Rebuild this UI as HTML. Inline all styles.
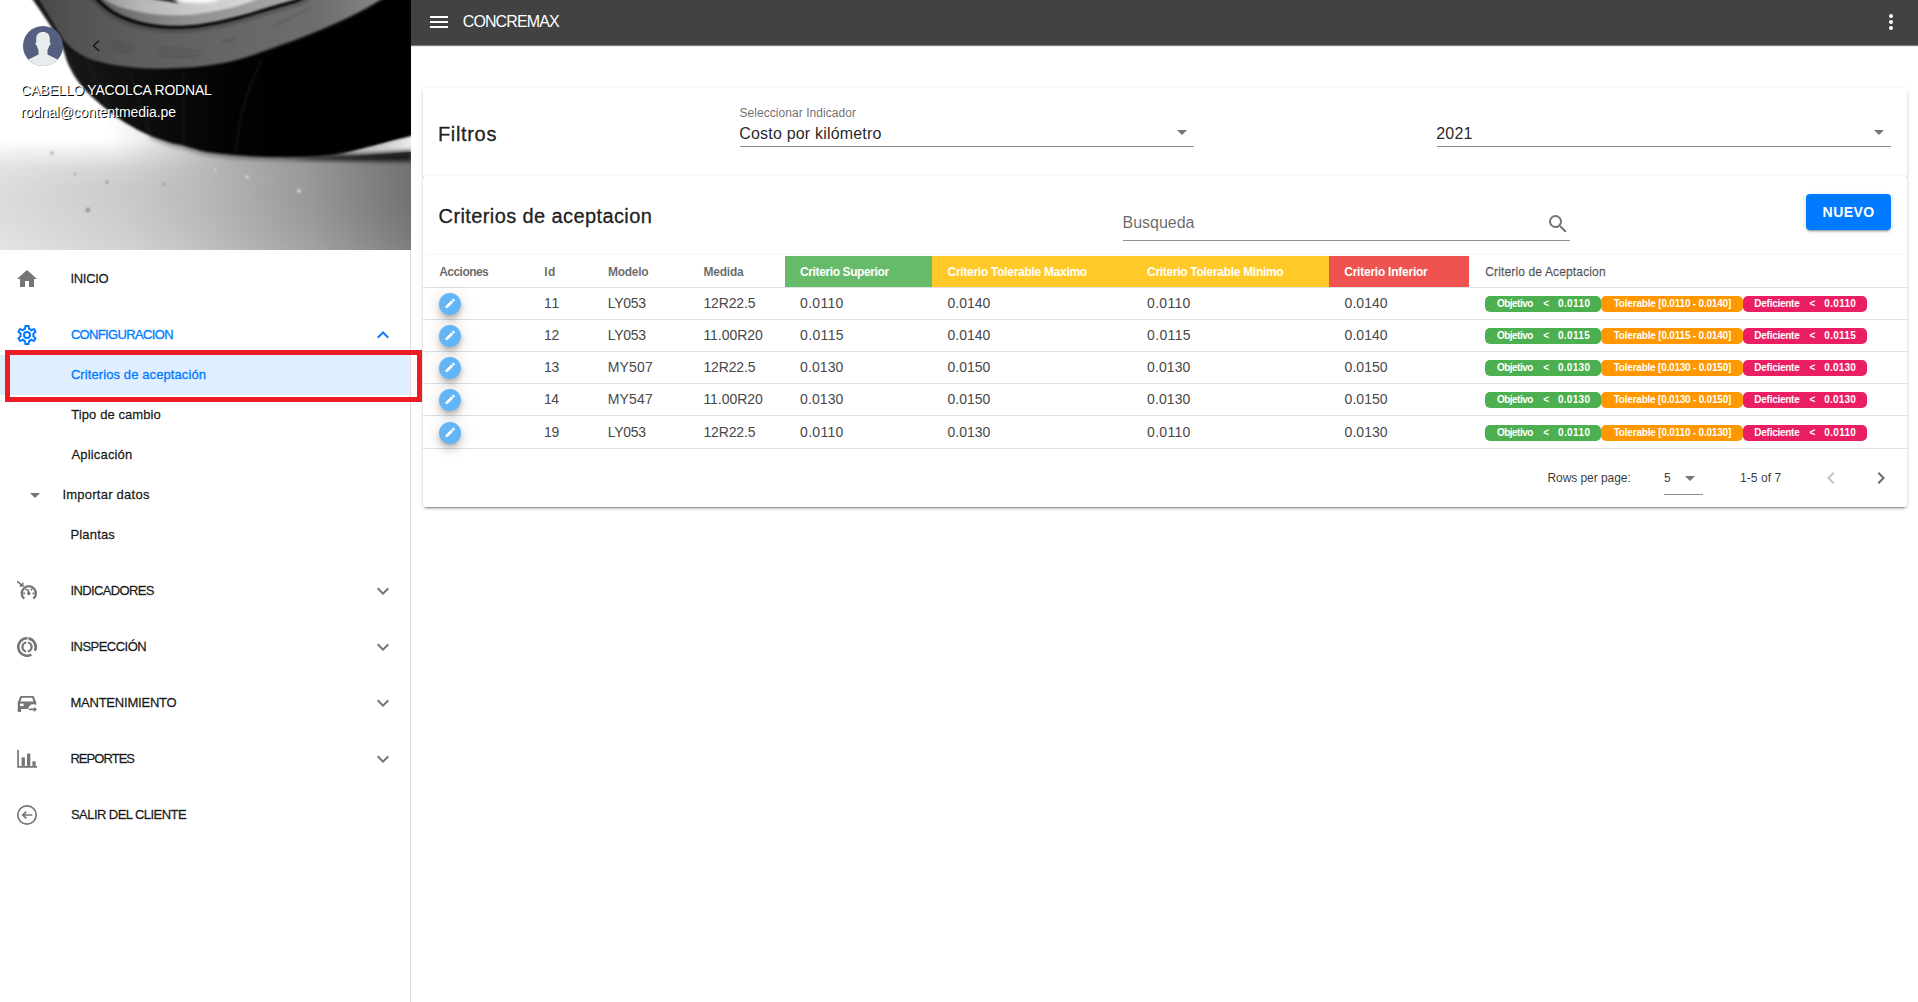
<!DOCTYPE html>
<html lang="es"><head><meta charset="utf-8"><title>CONCREMAX</title>
<style>
html,body{margin:0;padding:0}
body{width:1918px;height:1002px;overflow:hidden;position:relative;background:#fff;font-family:"Liberation Sans",sans-serif}
.t{position:absolute;white-space:pre;display:block}
.i{position:absolute;display:block;overflow:visible}
#drawer{position:absolute;left:0;top:0;width:410px;height:1002px;background:#fff;border-right:1px solid #dedede}
.tire{position:absolute;left:0;top:0;display:block}
.sel{position:absolute;left:0;top:355px;width:410px;height:40px;background:#e0efff}
#bar{position:absolute;left:411px;top:0;width:1507px;height:45px;background:#424242;box-shadow:0 1px 1px rgba(0,0,0,.5)}
#card1{position:absolute;left:423px;top:88px;width:1484px;height:90px;background:#fff;border-radius:4px;box-shadow:0 3px 1px -2px rgba(0,0,0,.2),0 2px 2px 0 rgba(0,0,0,.14),0 1px 5px 0 rgba(0,0,0,.12)}
#card2{position:absolute;left:423px;top:176px;width:1484px;height:331px;background:#fff;border-radius:4px;box-shadow:0 3px 1px -2px rgba(0,0,0,.28),0 2px 2px 0 rgba(0,0,0,.14),0 1px 5px 0 rgba(0,0,0,.12)}
#tbl{position:absolute;left:423px;top:255px;width:1484px;height:252px;background:#fff;border-radius:4px;box-shadow:0 -1px 2px rgba(0,0,0,.05)}
.ul{position:absolute;height:1px;background:#8f8f8f}
#btn{position:absolute;left:1806px;top:194px;width:85px;height:36px;background:#007bff;border-radius:4px;box-shadow:0 3px 1px -2px rgba(0,0,0,.2),0 2px 2px 0 rgba(0,0,0,.14),0 1px 5px 0 rgba(0,0,0,.12)}
.hc{position:absolute;top:256px;height:32px}
.hl{position:absolute;left:423px;width:1484px;height:1px;background:#e0e0e0}
.fab{position:absolute;left:439px;width:22px;height:22px;border-radius:50%;background:#64b5f6;box-shadow:0 3px 5px -1px rgba(0,0,0,.2),0 6px 10px 0 rgba(0,0,0,.14),0 1px 18px 0 rgba(0,0,0,.12)}
.chip{position:absolute;height:16px;border-radius:5px}
#red{position:absolute;left:5px;top:350px;width:407px;height:42px;border:5px solid #ed1c24}
</style></head>
<body>
<div id="drawer">
<svg class="tire" width="411" height="250" viewBox="0 0 411 250">
<defs>
<linearGradient id="gnd" x1="0" y1="0" x2="1" y2="0"><stop offset="0" stop-color="#e2e2e2"/><stop offset=".3" stop-color="#d0d0d0"/><stop offset=".5" stop-color="#bcbcbc"/><stop offset=".75" stop-color="#9c9c9c"/><stop offset="1" stop-color="#747474"/></linearGradient>
<linearGradient id="gv" x1="0" y1="0" x2="0" y2="1"><stop offset="0" stop-color="#000" stop-opacity=".06"/><stop offset=".5" stop-color="#000" stop-opacity=".02"/><stop offset="1" stop-color="#fff" stop-opacity=".08"/></linearGradient>
<linearGradient id="hz" x1="0" y1="0" x2="0" y2="1"><stop offset="0" stop-color="#fff" stop-opacity="1"/><stop offset=".42" stop-color="#fff" stop-opacity="1"/><stop offset=".6" stop-color="#fff" stop-opacity=".6"/><stop offset=".8" stop-color="#fff" stop-opacity=".15"/><stop offset="1" stop-color="#fff" stop-opacity="0"/></linearGradient>
<linearGradient id="hzx" x1="0" y1="0" x2="1" y2="0"><stop offset="0" stop-color="#fff" stop-opacity="1"/><stop offset=".26" stop-color="#fff" stop-opacity="1"/><stop offset=".56" stop-color="#fff" stop-opacity="0"/></linearGradient>
<mask id="hm"><rect x="0" y="100" width="411" height="90" fill="url(#hzx)"/></mask>
<linearGradient id="tr" x1="0" y1="0" x2="1" y2="0"><stop offset="0" stop-color="#1d1d1d"/><stop offset=".3" stop-color="#0d0d0d"/><stop offset=".55" stop-color="#020202"/><stop offset="1" stop-color="#000"/></linearGradient>
<linearGradient id="sw" x1="0" y1="0" x2="1" y2="0"><stop offset="0" stop-color="#464646"/><stop offset=".12" stop-color="#525252"/><stop offset=".3" stop-color="#5e5e5e"/><stop offset=".55" stop-color="#666"/><stop offset=".8" stop-color="#6e6e6e"/><stop offset="1" stop-color="#8a8a8a"/></linearGradient>
<linearGradient id="rm" x1="0" y1="0" x2="1" y2="0"><stop offset="0" stop-color="#4c4c4c"/><stop offset=".2" stop-color="#727272"/><stop offset=".45" stop-color="#8e8e8e"/><stop offset=".75" stop-color="#9e9e9e"/><stop offset="1" stop-color="#adadad"/></linearGradient>
<linearGradient id="rl" x1="0" y1="0" x2="1" y2="0"><stop offset="0" stop-color="#929292"/><stop offset=".25" stop-color="#b6b6b6"/><stop offset=".6" stop-color="#cbcbcb"/><stop offset="1" stop-color="#dadada"/></linearGradient>
<filter id="b1" color-interpolation-filters="sRGB" x="-5%" y="-5%" width="110%" height="110%"><feGaussianBlur stdDeviation=".8"/></filter>
<filter id="b2" color-interpolation-filters="sRGB" x="-10%" y="-10%" width="120%" height="120%"><feGaussianBlur stdDeviation="1.6"/></filter>
<filter id="b3" color-interpolation-filters="sRGB" x="-10%" y="-100%" width="120%" height="300%"><feGaussianBlur stdDeviation="2"/></filter>
<linearGradient id="wg" x1="0" y1="0" x2="1" y2="0"><stop offset="0" stop-color="#aaa" stop-opacity="0"/><stop offset=".3" stop-color="#c4c4c4" stop-opacity=".8"/><stop offset="1" stop-color="#ececec"/></linearGradient>
</defs>
<rect width="411" height="250" fill="#fff"/>
<rect y="110" width="411" height="140" fill="url(#gnd)"/>
<rect y="110" width="411" height="140" fill="url(#gv)"/>
<g mask="url(#hm)"><rect y="106" width="411" height="80" fill="url(#hz)"/></g>
<path d="M150.0 135.5 C153.3 136.8 164.5 141.2 170.0 143.0 C175.5 144.8 178.0 144.7 183.0 146.0 C188.0 147.3 194.7 149.8 200.0 151.0 C205.3 152.2 208.3 152.7 215.0 153.5 C221.7 154.3 230.8 155.3 240.0 156.0 C249.2 156.7 260.0 157.2 270.0 157.5 C280.0 157.8 290.8 157.8 300.0 157.5 C309.2 157.2 317.5 156.8 325.0 156.0 C332.5 155.2 341.7 153.5 345.0 153.0" fill="none" stroke="#000" stroke-width="5" opacity=".36" filter="url(#b3)"/>
<path d="M334 155 Q375 146 412 134 L412 152 Q372 155 334 156.500 Z" fill="url(#wg)"/>
<path d="M285 158.500 Q350 155.500 412 150.500 L412 161.500 Q350 162 285 158.500 Z" fill="#141414" opacity=".9" filter="url(#b3)"/>
<g fill="#555" opacity=".55" filter="url(#b1)"><circle cx="52" cy="153" r="1.6"/><circle cx="107" cy="182" r="1.5"/><circle cx="88" cy="210" r="2.2"/><circle cx="75" cy="174" r="1.1"/><circle cx="164" cy="184" r="1.2"/></g>
<g fill="#eee" opacity=".7" filter="url(#b1)"><circle cx="247" cy="177" r="1.8"/><circle cx="299" cy="191" r="2"/><circle cx="215" cy="170" r="1.2"/></g>
<g filter="url(#b1)">
<path d="M29.0 -6.0 C29.7 -5.0 29.8 -4.7 33.0 0.0 C36.2 4.7 43.3 14.7 48.0 22.0 C52.7 29.3 57.5 36.7 61.0 44.0 C64.5 51.3 65.8 59.3 69.0 66.0 C72.2 72.7 75.7 78.4 80.0 84.0 C84.3 89.6 88.7 93.8 95.0 99.5 C101.3 105.2 109.8 112.4 118.0 118.0 C126.2 123.6 135.3 128.9 144.0 133.0 C152.7 137.1 163.5 140.4 170.0 142.5 C176.5 144.6 178.0 144.2 183.0 145.5 C188.0 146.8 194.7 149.2 200.0 150.5 C205.3 151.8 208.3 152.2 215.0 153.0 C221.7 153.8 230.8 154.8 240.0 155.5 C249.2 156.2 260.0 156.8 270.0 157.0 C280.0 157.2 290.8 157.2 300.0 157.0 C309.2 156.8 317.5 156.2 325.0 155.5 C332.5 154.8 339.2 153.6 345.0 152.5 C350.8 151.4 353.3 150.7 360.0 149.0 C366.7 147.3 376.2 144.8 385.0 142.5 C393.8 140.2 408.3 136.7 413.0 135.5 L413 -8 L30 -8 Z" fill="url(#tr)"/>
<path d="M35.0 -6.0 C35.5 -5.0 35.5 -4.3 38.0 0.0 C40.5 4.3 45.8 13.2 50.0 20.0 C54.2 26.8 59.2 35.9 63.0 41.0 C66.8 46.1 69.2 47.6 73.0 50.5 C76.8 53.4 81.5 56.4 86.0 58.5 C90.5 60.6 95.3 61.8 100.0 63.0 C104.7 64.2 108.2 65.1 114.0 66.0 C119.8 66.9 128.2 67.9 135.0 68.5 C141.8 69.1 148.3 69.4 155.0 69.5 C161.7 69.6 168.2 69.3 175.0 69.0 C181.8 68.7 189.2 68.5 196.0 67.8 C202.8 67.1 209.3 66.1 216.0 65.0 C222.7 63.9 229.2 62.8 236.0 61.0 C242.8 59.2 250.2 56.8 257.0 54.5 C263.8 52.2 269.8 50.0 277.0 47.4 C284.2 44.8 292.8 41.7 300.0 39.0 C307.2 36.3 312.5 34.2 320.0 31.0 C327.5 27.8 337.5 23.5 345.0 20.0 C352.5 16.5 358.8 13.3 365.0 10.0 C371.2 6.7 377.5 2.8 382.0 0.0 C386.5 -2.8 390.3 -5.8 392.0 -7.0 L30 -8 Z" fill="url(#sw)"/>
<path d="M35.0 -6.0 C35.5 -5.0 35.5 -4.3 38.0 0.0 C40.5 4.3 45.8 13.2 50.0 20.0 C54.2 26.8 59.2 35.9 63.0 41.0 C66.8 46.1 69.2 47.6 73.0 50.5 C76.8 53.4 81.5 56.4 86.0 58.5 C90.5 60.6 95.3 61.8 100.0 63.0 C104.7 64.2 108.2 65.1 114.0 66.0 C119.8 66.9 128.2 67.9 135.0 68.5 C141.8 69.1 148.3 69.4 155.0 69.5 C161.7 69.6 168.2 69.3 175.0 69.0 C181.8 68.7 189.2 68.5 196.0 67.8 C202.8 67.1 209.3 66.1 216.0 65.0 C222.7 63.9 229.2 62.8 236.0 61.0 C242.8 59.2 250.2 56.8 257.0 54.5 C263.8 52.2 269.8 50.0 277.0 47.4 C284.2 44.8 292.8 41.7 300.0 39.0 C307.2 36.3 312.5 34.2 320.0 31.0 C327.5 27.8 337.5 23.5 345.0 20.0 C352.5 16.5 358.8 13.3 365.0 10.0 C371.2 6.7 377.5 2.8 382.0 0.0 C386.5 -2.8 390.3 -5.8 392.0 -7.0" fill="none" stroke="#0a0a0a" stroke-width="2.2" opacity=".8"/>
<path d="M62 44 L78 80 M86 58 L112 112 M130 72 L150 134 M183 73 L184 144" stroke="#2a2a2a" stroke-width="1.3" fill="none" opacity=".55"/>
<path d="M262 60 Q240 100 236 154" stroke="#1c1c1c" stroke-width="1.2" fill="none"/>
<path d="M90.0 -7.0 C91.3 -5.8 95.5 -2.2 98.0 0.0 C100.5 2.2 102.3 4.3 105.0 6.5 C107.7 8.7 110.3 10.9 114.0 13.0 C117.7 15.1 122.5 17.2 127.0 19.0 C131.5 20.8 136.3 22.3 141.0 23.5 C145.7 24.7 150.5 25.4 155.0 26.0 C159.5 26.6 163.5 27.0 168.0 27.2 C172.5 27.4 177.3 27.4 182.0 27.2 C186.7 27.0 191.3 26.7 196.0 26.2 C200.7 25.7 205.5 24.8 210.0 24.0 C214.5 23.2 217.5 22.8 223.0 21.5 C228.5 20.2 236.3 18.3 243.0 16.5 C249.7 14.7 256.8 12.3 263.0 10.5 C269.2 8.7 274.3 7.2 280.0 5.5 C285.7 3.8 292.0 2.4 297.0 0.5 C302.0 -1.4 307.8 -4.9 310.0 -6.0 L82 -8 Z" fill="url(#rm)"/>
<path d="M97.0 -8.0 C98.3 -6.7 101.5 -2.4 105.0 0.0 C108.5 2.4 113.0 4.7 118.0 6.5 C123.0 8.3 129.3 9.8 135.0 11.0 C140.7 12.2 146.5 13.3 152.0 14.0 C157.5 14.7 163.0 15.0 168.0 15.2 C173.0 15.4 177.3 15.4 182.0 15.2 C186.7 15.0 190.3 14.9 196.0 14.2 C201.7 13.5 209.3 12.3 216.0 11.0 C222.7 9.7 230.3 8.0 236.0 6.5 C241.7 5.0 246.5 3.2 250.0 2.0 C253.5 0.8 254.5 0.7 257.0 -1.0 C259.5 -2.7 263.7 -6.8 265.0 -8.0 Z" fill="url(#rl)"/>
<path d="M90.0 -7.0 C91.3 -5.8 95.5 -2.2 98.0 0.0 C100.5 2.2 102.3 4.3 105.0 6.5 C107.7 8.7 110.3 10.9 114.0 13.0 C117.7 15.1 122.5 17.2 127.0 19.0 C131.5 20.8 136.3 22.3 141.0 23.5 C145.7 24.7 150.5 25.4 155.0 26.0 C159.5 26.6 163.5 27.0 168.0 27.2 C172.5 27.4 177.3 27.4 182.0 27.2 C186.7 27.0 191.3 26.7 196.0 26.2 C200.7 25.7 205.5 24.8 210.0 24.0 C214.5 23.2 217.5 22.8 223.0 21.5 C228.5 20.2 236.3 18.3 243.0 16.5 C249.7 14.7 256.8 12.3 263.0 10.5 C269.2 8.7 274.3 7.2 280.0 5.5 C285.7 3.8 292.0 2.4 297.0 0.5 C302.0 -1.4 307.8 -4.9 310.0 -6.0" fill="none" stroke="#000" stroke-width="6" opacity=".16" transform="translate(0,3)"/>
<path d="M90.0 -7.0 C91.3 -5.8 95.5 -2.2 98.0 0.0 C100.5 2.2 102.3 4.3 105.0 6.5 C107.7 8.7 110.3 10.9 114.0 13.0 C117.7 15.1 122.5 17.2 127.0 19.0 C131.5 20.8 136.3 22.3 141.0 23.5 C145.7 24.7 150.5 25.4 155.0 26.0 C159.5 26.6 163.5 27.0 168.0 27.2 C172.5 27.4 177.3 27.4 182.0 27.2 C186.7 27.0 191.3 26.7 196.0 26.2 C200.7 25.7 205.5 24.8 210.0 24.0 C214.5 23.2 217.5 22.8 223.0 21.5 C228.5 20.2 236.3 18.3 243.0 16.5 C249.7 14.7 256.8 12.3 263.0 10.5 C269.2 8.7 274.3 7.2 280.0 5.5 C285.7 3.8 292.0 2.4 297.0 0.5 C302.0 -1.4 307.8 -4.9 310.0 -6.0" fill="none" stroke="#030303" stroke-width="3"/>
<ellipse cx="198" cy="-1" rx="21" ry="3.800" fill="#fff" filter="url(#b2)"/>
<path d="M146 -2 L179 3.5 L171 -2 Z" fill="#2c2c2c"/>
</g>
<g stroke="#3a3a3a" stroke-width="1" opacity=".55" fill="none" filter="url(#b1)">
<path d="M112 41 l22 6 M112 45 l20 5 M111 49 l18 4"/>
<path d="M160 47 l40 4 M158 51 l42 4 M158 55 l40 3"/>
<path d="M222 42 l14 -3 M272 27 l38 -19"/>
</g>
</svg>
<svg class="i" style="left:23px;top:26px" width="40" height="40" viewBox="0 0 40 40"><defs><clipPath id="av"><circle cx="20" cy="20" r="20"/></clipPath></defs><g clip-path="url(#av)"><rect width="40" height="40" fill="#556080"/><path d="M20 6c-4.300 0-6.800 2.700-6.800 6.600v3.600c-.5.300-.7 1-.6 1.800.1 1 .6 1.600 1.200 1.800.3 1.300 1.200 3.200 1.700 4.200v4.400L5.500 33.500 3 41h34l-2.500-7.500-10-5.100V24c.5-1 1.400-2.900 1.700-4.200.6-.2 1.100-.8 1.200-1.800.1-.8-.1-1.500-.6-1.800v-3.600C26.800 8.700 24.300 6 20 6z" fill="#e7eced"/></g></svg>
<svg class="i" style="left:85px;top:34px" width="24" height="24" viewBox="0 0 24 24" fill="none" stroke="#14142a" stroke-width="1.500"><path d="M14 6.500L8.600 11.700L14 17"/></svg>
<div class="sel"></div>
<svg class="i" style="left:15px;top:267px" width="24" height="24" viewBox="0 0 24 24" fill="#757575" ><path d="M10,20V14H14V20H19V12H22L12,3L2,12H5V20H10Z"/></svg>
<svg class="i" style="left:15px;top:323px" width="24" height="24" viewBox="0 0 24 24" fill="#007bff" ><path d="M12,8A4,4 0 0,1 16,12A4,4 0 0,1 12,16A4,4 0 0,1 8,12A4,4 0 0,1 12,8M12,10A2,2 0 0,0 10,12A2,2 0 0,0 12,14A2,2 0 0,0 14,12A2,2 0 0,0 12,10M10,22C9.75,22 9.54,21.82 9.5,21.58L9.13,18.93C8.5,18.68 7.96,18.34 7.44,17.94L4.95,18.95C4.73,19.03 4.46,18.95 4.34,18.73L2.34,15.27C2.21,15.05 2.27,14.78 2.46,14.63L4.57,12.97L4.5,12L4.57,11L2.46,9.37C2.27,9.22 2.21,8.95 2.34,8.73L4.34,5.27C4.46,5.05 4.73,4.96 4.95,5.05L7.44,6.05C7.96,5.66 8.5,5.32 9.13,5.07L9.5,2.42C9.54,2.18 9.75,2 10,2H14C14.25,2 14.46,2.18 14.5,2.42L14.87,5.07C15.5,5.32 16.04,5.66 16.56,6.05L19.05,5.05C19.27,4.96 19.54,5.05 19.66,5.27L21.66,8.73C21.79,8.95 21.73,9.22 21.54,9.37L19.43,11L19.5,12L19.43,13L21.54,14.63C21.73,14.78 21.79,15.05 21.66,15.27L19.66,18.73C19.54,18.95 19.27,19.04 19.05,18.95L16.56,17.95C16.04,18.34 15.5,18.68 14.87,18.93L14.5,21.58C14.46,21.82 14.25,22 14,22H10M11.25,4L10.88,6.61C9.68,6.86 8.62,7.5 7.85,8.39L5.44,7.35L4.69,8.65L6.8,10.2C6.4,11.37 6.4,12.64 6.8,13.8L4.68,15.36L5.43,16.66L7.86,15.62C8.63,16.5 9.68,17.14 10.87,17.38L11.24,20H12.76L13.13,17.39C14.32,17.14 15.37,16.5 16.14,15.62L18.57,16.66L19.32,15.36L17.2,13.81C17.6,12.64 17.6,11.37 17.2,10.2L19.31,8.65L18.56,7.35L16.15,8.39C15.38,7.5 14.32,6.86 13.12,6.62L12.75,4H11.25Z"/></svg>
<svg class="i" style="left:371px;top:322.5px" width="24" height="24" viewBox="0 0 24 24" fill="#007bff" ><path d="M7.41,15.41L12,10.83L16.59,15.41L18,14L12,8L6,14L7.41,15.41Z"/></svg>
<svg class="i" style="left:23px;top:483px" width="24" height="24" viewBox="0 0 24 24" fill="#757575" ><path d="M7,10L12,15L17,10H7Z"/></svg>
<svg class="i" style="left:371px;top:579px" width="24" height="24" viewBox="0 0 24 24" fill="#757575" ><path d="M7.41,8.58L12,13.17L16.59,8.58L18,10L12,16L6,10L7.41,8.58Z"/></svg>
<svg class="i" style="left:371px;top:635px" width="24" height="24" viewBox="0 0 24 24" fill="#757575" ><path d="M7.41,8.58L12,13.17L16.59,8.58L18,10L12,16L6,10L7.41,8.58Z"/></svg>
<svg class="i" style="left:371px;top:691px" width="24" height="24" viewBox="0 0 24 24" fill="#757575" ><path d="M7.41,8.58L12,13.17L16.59,8.58L18,10L12,16L6,10L7.41,8.58Z"/></svg>
<svg class="i" style="left:371px;top:747px" width="24" height="24" viewBox="0 0 24 24" fill="#757575" ><path d="M7.41,8.58L12,13.17L16.59,8.58L18,10L12,16L6,10L7.41,8.58Z"/></svg>
<svg class="i" style="left:15px;top:578px" width="24" height="24" viewBox="0 0 24 24" fill="none" stroke="#757575">
<path d="M9.240 20.740A7.100 7.100 0 1 1 18.360 20.740" stroke-width="2.300"/>
<path d="M8.200 15.400h1.900M17.500 15.400h1.900M10.500 10.700l1.100 1.500M17.100 10.700l-1.100 1.500" stroke-width="1.700"/>
<circle cx="13.800" cy="15.400" r="1.700" fill="#757575" stroke="none"/>
<path d="M13.800 15.400l-1-4.200" stroke-width="1.700"/>
<path d="M2.200 3.300l5.300 4.300M7.800 4.800v3.100H4.700" stroke-width="1.600"/>
</svg>
<svg class="i" style="left:15px;top:635px" width="24" height="24" viewBox="0 0 24 24" fill="none" stroke="#757575">
<path d="M16.350 19.530A8.700 8.700 0 1 1 19.880 15.680" stroke-width="2.600"/>
<path d="M20.700 9.500v4.600" stroke-width="1.800"/>
<path d="M12.900 1.500v3.600" stroke="#fff" stroke-width="1"/>
<circle cx="12" cy="12" r="4.600" stroke-width="2.300"/>
<path d="M12.200 5.800v3M12 15.300v3" stroke="#fff" stroke-width="1.800"/>
</svg>
<svg class="i" style="left:15px;top:691px" width="24" height="24" viewBox="0 0 24 24" fill="#757575">
<path d="M6.400 5h11.200c.7 0 1.300.4 1.500 1.100L21.200 11.400V18H2.800V20.700H6V18H2.800V11.400L4.900 6.100C5.100 5.400 5.700 5 6.400 5z"/>
<rect x="2.800" y="17.500" width="3.300" height="3.200"/>
<path d="M6.900 6.700h10.200l1.500 3.900H5.400z" fill="#fff"/>
<rect x="5" y="12.600" width="3.600" height="2.500" fill="#fff"/>
<circle cx="18.200" cy="18.300" r="5" fill="#fff"/>
<path d="M13.800 17.600h5v-1.900l3.300 2.700-3.300 2.700v-1.900h-5z"/>
</svg>
<svg class="i" style="left:15px;top:747px" width="24" height="24" viewBox="0 0 24 24" fill="#757575">
<path d="M2.200 3h1.700v15.900H22v1.900H2.200z"/><rect x="6.600" y="10.400" width="3.300" height="8.500"/><rect x="12" y="6.600" width="3.300" height="12.300"/><rect x="17.400" y="14.300" width="3.300" height="4.600"/>
</svg>
<svg class="i" style="left:15px;top:803px" width="24" height="24" viewBox="0 0 24 24" fill="none" stroke="#757575">
<circle cx="12" cy="12" r="9.200" stroke-width="1.700"/><path d="M17.300 12H8.200M11.300 8.600L7.800 12l3.500 3.400" stroke-width="1.700"/>
</svg>
</div>
<div id="bar"></div>
<svg class="i" style="left:427px;top:10px" width="24" height="24" viewBox="0 0 24 24" fill="#fff" ><path d="M3,6H21V8H3V6M3,11H21V13H3V11M3,16H21V18H3V16Z"/></svg>
<svg class="i" style="left:1879px;top:10px" width="24" height="24" viewBox="0 0 24 24" fill="#fff" ><path d="M12,16A2,2 0 0,1 14,18A2,2 0 0,1 12,20A2,2 0 0,1 10,18A2,2 0 0,1 12,16M12,10A2,2 0 0,1 14,12A2,2 0 0,1 12,14A2,2 0 0,1 10,12A2,2 0 0,1 12,10M12,4A2,2 0 0,1 14,6A2,2 0 0,1 12,8A2,2 0 0,1 10,6A2,2 0 0,1 12,4Z"/></svg>
<div id="card1"></div><div id="card2"></div><div id="tbl"></div>
<div class="ul" style="left:740px;top:146px;width:454px"></div>
<div class="ul" style="left:1437px;top:146px;width:454px"></div>
<div class="ul" style="left:1123px;top:240px;width:447px"></div>
<svg class="i" style="left:1170px;top:119.6px" width="24" height="24" viewBox="0 0 24 24" fill="#757575" ><path d="M7,10L12,15L17,10H7Z"/></svg>
<svg class="i" style="left:1867px;top:119.8px" width="24" height="24" viewBox="0 0 24 24" fill="#757575" ><path d="M7,10L12,15L17,10H7Z"/></svg>
<svg class="i" style="left:1545.7px;top:212px" width="24" height="24" viewBox="0 0 24 24" fill="#757575" ><path d="M9.5,3A6.5,6.5 0 0,1 16,9.5C16,11.11 15.41,12.59 14.44,13.73L14.71,14H15.5L20.5,19L19,20.5L14,15.5V14.71L13.73,14.44C12.59,15.41 11.11,16 9.5,16A6.5,6.5 0 0,1 3,9.5A6.5,6.5 0 0,1 9.5,3M9.5,5C7,5 5,7 5,9.5C5,12 7,14 9.5,14C12,14 14,12 14,9.5C14,7 12,5 9.5,5Z"/></svg>
<div id="btn"></div>
<div class="hc" style="left:785px;width:147px;background:#66bb6a"></div>
<div class="hc" style="left:932px;width:397px;background:#ffca28"></div>
<div class="hc" style="left:1329px;width:140px;background:#ef5350"></div>
<div class="hl" style="top:287px"></div>
<div class="hl" style="top:319px"></div>
<div class="hl" style="top:351px"></div>
<div class="hl" style="top:383px"></div>
<div class="hl" style="top:415px"></div>
<div class="hl" style="top:448px"></div>
<div class="fab" style="top:293px"></div>
<svg class="i" style="left:443.6px;top:297.4px" width="12.6" height="12.6" viewBox="0 0 24 24" fill="#fff" ><path d="M20.71,7.04C21.1,6.65 21.1,6 20.71,5.63L18.37,3.29C18,2.9 17.35,2.9 16.96,3.29L15.12,5.12L18.87,8.87M3,17.25V21H6.75L17.81,9.93L14.06,6.18L3,17.25Z"/></svg>
<div class="chip" style="left:1485px;top:296px;width:116px;background:#4caf50"></div>
<div class="chip" style="left:1601.200px;top:296px;width:141.800px;background:#ff9800"></div>
<div class="chip" style="left:1743.200px;top:296px;width:123.800px;background:#e91e63"></div>
<div class="fab" style="top:325px"></div>
<svg class="i" style="left:443.6px;top:329.4px" width="12.6" height="12.6" viewBox="0 0 24 24" fill="#fff" ><path d="M20.71,7.04C21.1,6.65 21.1,6 20.71,5.63L18.37,3.29C18,2.9 17.35,2.9 16.96,3.29L15.12,5.12L18.87,8.87M3,17.25V21H6.75L17.81,9.93L14.06,6.18L3,17.25Z"/></svg>
<div class="chip" style="left:1485px;top:328px;width:116px;background:#4caf50"></div>
<div class="chip" style="left:1601.200px;top:328px;width:141.800px;background:#ff9800"></div>
<div class="chip" style="left:1743.200px;top:328px;width:123.800px;background:#e91e63"></div>
<div class="fab" style="top:357px"></div>
<svg class="i" style="left:443.6px;top:361.4px" width="12.6" height="12.6" viewBox="0 0 24 24" fill="#fff" ><path d="M20.71,7.04C21.1,6.65 21.1,6 20.71,5.63L18.37,3.29C18,2.9 17.35,2.9 16.96,3.29L15.12,5.12L18.87,8.87M3,17.25V21H6.75L17.81,9.93L14.06,6.18L3,17.25Z"/></svg>
<div class="chip" style="left:1485px;top:360px;width:116px;background:#4caf50"></div>
<div class="chip" style="left:1601.200px;top:360px;width:141.800px;background:#ff9800"></div>
<div class="chip" style="left:1743.200px;top:360px;width:123.800px;background:#e91e63"></div>
<div class="fab" style="top:389px"></div>
<svg class="i" style="left:443.6px;top:393.4px" width="12.6" height="12.6" viewBox="0 0 24 24" fill="#fff" ><path d="M20.71,7.04C21.1,6.65 21.1,6 20.71,5.63L18.37,3.29C18,2.9 17.35,2.9 16.96,3.29L15.12,5.12L18.87,8.87M3,17.25V21H6.75L17.81,9.93L14.06,6.18L3,17.25Z"/></svg>
<div class="chip" style="left:1485px;top:392px;width:116px;background:#4caf50"></div>
<div class="chip" style="left:1601.200px;top:392px;width:141.800px;background:#ff9800"></div>
<div class="chip" style="left:1743.200px;top:392px;width:123.800px;background:#e91e63"></div>
<div class="fab" style="top:421.5px"></div>
<svg class="i" style="left:443.6px;top:425.9px" width="12.6" height="12.6" viewBox="0 0 24 24" fill="#fff" ><path d="M20.71,7.04C21.1,6.65 21.1,6 20.71,5.63L18.37,3.29C18,2.9 17.35,2.9 16.96,3.29L15.12,5.12L18.87,8.87M3,17.25V21H6.75L17.81,9.93L14.06,6.18L3,17.25Z"/></svg>
<div class="chip" style="left:1485px;top:425px;width:116px;background:#4caf50"></div>
<div class="chip" style="left:1601.200px;top:425px;width:141.800px;background:#ff9800"></div>
<div class="chip" style="left:1743.200px;top:425px;width:123.800px;background:#e91e63"></div>
<div class="ul" style="left:1664px;top:494px;width:39px"></div>
<svg class="i" style="left:1678.4px;top:465.8px" width="24" height="24" viewBox="0 0 24 24" fill="#757575" ><path d="M7,10L12,15L17,10H7Z"/></svg>
<svg class="i" style="left:1819px;top:466px" width="24" height="24" viewBox="0 0 24 24" fill="#c4c4c4" ><path d="M15.41,16.58L10.83,12L15.41,7.41L14,6L8,12L14,18L15.41,16.58Z"/></svg>
<svg class="i" style="left:1869px;top:466px" width="24" height="24" viewBox="0 0 24 24" fill="#6a6a6a" ><path d="M8.59,16.58L13.17,12L8.59,7.41L10,6L16,12L10,18L8.59,16.58Z"/></svg>
<div id="red"></div>
<span class="t" style="left:462.75px;top:13.5px;font-size:16px;line-height:16px;letter-spacing:-0.898px;color:#fff;">CONCREMAX</span>
<span class="t" style="left:20.84px;top:82.5px;font-size:14px;line-height:14px;letter-spacing:-0.218px;color:#fff;text-shadow:1px 1px 0 #000;">CABELLO YACOLCA RODNAL</span>
<span class="t" style="left:20.62px;top:104.5px;font-size:14px;line-height:14px;letter-spacing:-0.053px;color:#fff;text-shadow:1px 1px 0 #000;">rodnal@contentmedia.pe</span>
<span class="t" style="left:70.48px;top:272.0px;font-size:13px;line-height:13px;letter-spacing:-0.309px;color:rgba(0,0,0,.87);-webkit-text-stroke:.3px currentColor;">INICIO</span>
<span class="t" style="left:70.89px;top:328.0px;font-size:13px;line-height:13px;letter-spacing:-0.653px;color:#007bff;-webkit-text-stroke:.3px currentColor;">CONFIGURACION</span>
<span class="t" style="left:70.89px;top:368.0px;font-size:13px;line-height:13px;letter-spacing:0.097px;color:#007bff;-webkit-text-stroke:.3px currentColor;">Criterios de aceptación</span>
<span class="t" style="left:71.3px;top:408.0px;font-size:13px;line-height:13px;letter-spacing:0.083px;color:rgba(0,0,0,.87);-webkit-text-stroke:.3px currentColor;">Tipo de cambio</span>
<span class="t" style="left:71.5px;top:448.0px;font-size:13px;line-height:13px;letter-spacing:0.164px;color:rgba(0,0,0,.87);-webkit-text-stroke:.3px currentColor;">Aplicación</span>
<span class="t" style="left:62.38px;top:488.0px;font-size:13px;line-height:13px;letter-spacing:0.247px;color:rgba(0,0,0,.87);-webkit-text-stroke:.3px currentColor;">Importar datos</span>
<span class="t" style="left:70.48px;top:528.0px;font-size:13px;line-height:13px;letter-spacing:0.16px;color:rgba(0,0,0,.87);-webkit-text-stroke:.3px currentColor;">Plantas</span>
<span class="t" style="left:70.48px;top:584.0px;font-size:13px;line-height:13px;letter-spacing:-0.623px;color:rgba(0,0,0,.87);-webkit-text-stroke:.3px currentColor;">INDICADORES</span>
<span class="t" style="left:70.48px;top:640.0px;font-size:13px;line-height:13px;letter-spacing:-0.525px;color:rgba(0,0,0,.87);-webkit-text-stroke:.3px currentColor;">INSPECCIÓN</span>
<span class="t" style="left:70.38px;top:696.0px;font-size:13px;line-height:13px;letter-spacing:-0.211px;color:rgba(0,0,0,.87);-webkit-text-stroke:.3px currentColor;">MANTENIMIENTO</span>
<span class="t" style="left:70.38px;top:752.0px;font-size:13px;line-height:13px;letter-spacing:-0.945px;color:rgba(0,0,0,.87);-webkit-text-stroke:.3px currentColor;">REPORTES</span>
<span class="t" style="left:70.99px;top:808.0px;font-size:13px;line-height:13px;letter-spacing:-0.558px;color:rgba(0,0,0,.87);-webkit-text-stroke:.3px currentColor;">SALIR DEL CLIENTE</span>
<span class="t" style="left:437.94px;top:124.0px;font-size:20px;line-height:20px;letter-spacing:0.666px;color:rgba(0,0,0,.87);-webkit-text-stroke:.35px currentColor;">Filtros</span>
<span class="t" style="left:739.5px;top:107.0px;font-size:12px;line-height:12px;letter-spacing:0.052px;color:rgba(0,0,0,.6);">Seleccionar Indicador</span>
<span class="t" style="left:739.25px;top:126.0px;font-size:16px;line-height:16px;letter-spacing:0.191px;color:rgba(0,0,0,.87);">Costo por kilómetro</span>
<span class="t" style="left:1436.25px;top:126.0px;font-size:16px;line-height:16px;letter-spacing:0.185px;color:rgba(0,0,0,.87);">2021</span>
<span class="t" style="left:438.56px;top:206.0px;font-size:20px;line-height:20px;letter-spacing:0.398px;color:rgba(0,0,0,.87);-webkit-text-stroke:.35px currentColor;">Criterios de aceptacion</span>
<span class="t" style="left:1122.5px;top:215.25px;font-size:16px;line-height:16px;letter-spacing:-0.023px;color:rgba(0,0,0,.6);">Busqueda</span>
<span class="t" style="left:1822.62px;top:205.0px;font-size:14px;line-height:14px;font-weight:700;letter-spacing:0.445px;color:#fff;">NUEVO</span>
<span class="t" style="left:439.25px;top:266.0px;font-size:12px;line-height:12px;font-weight:700;letter-spacing:-0.555px;color:rgba(0,0,0,.6);">Acciones</span>
<span class="t" style="left:544.2px;top:266.0px;font-size:12px;line-height:12px;font-weight:700;letter-spacing:0.416px;color:rgba(0,0,0,.6);">Id</span>
<span class="t" style="left:607.95px;top:266.0px;font-size:12px;line-height:12px;font-weight:700;letter-spacing:-0.253px;color:rgba(0,0,0,.6);">Modelo</span>
<span class="t" style="left:703.45px;top:266.0px;font-size:12px;line-height:12px;font-weight:700;letter-spacing:-0.223px;color:rgba(0,0,0,.6);">Medida</span>
<span class="t" style="left:800.05px;top:266.0px;font-size:12px;line-height:12px;font-weight:700;letter-spacing:-0.389px;color:#fff;">Criterio Superior</span>
<span class="t" style="left:947.55px;top:266.0px;font-size:12px;line-height:12px;font-weight:700;letter-spacing:-0.285px;color:#fff;">Criterio Tolerable Maximo</span>
<span class="t" style="left:1147.05px;top:266.0px;font-size:12px;line-height:12px;font-weight:700;letter-spacing:-0.299px;color:#fff;">Criterio Tolerable Minimo</span>
<span class="t" style="left:1344.25px;top:266.0px;font-size:12px;line-height:12px;font-weight:700;letter-spacing:-0.239px;color:#fff;">Criterio Inferior</span>
<span class="t" style="left:1485.2px;top:266.0px;font-size:12px;line-height:12px;letter-spacing:0.143px;color:rgba(0,0,0,.6);-webkit-text-stroke:.3px currentColor;">Criterio de Aceptacion</span>
<span class="t" style="left:544.12px;top:296.0px;font-size:14px;line-height:14px;letter-spacing:0.659px;color:#484848;">11</span>
<span class="t" style="left:607.66px;top:296.0px;font-size:14px;line-height:14px;letter-spacing:-0.258px;color:#484848;">LY053</span>
<span class="t" style="left:703.38px;top:296.0px;font-size:14px;line-height:14px;letter-spacing:-0.123px;color:#484848;">12R22.5</span>
<span class="t" style="left:800.06px;top:296.0px;font-size:14px;line-height:14px;letter-spacing:0.301px;color:#484848;">0.0110</span>
<span class="t" style="left:947.56px;top:296.0px;font-size:14px;line-height:14px;letter-spacing:-0.007px;color:#484848;">0.0140</span>
<span class="t" style="left:1147.06px;top:296.0px;font-size:14px;line-height:14px;letter-spacing:0.301px;color:#484848;">0.0110</span>
<span class="t" style="left:1344.56px;top:296.0px;font-size:14px;line-height:14px;letter-spacing:0.053px;color:#484848;">0.0140</span>
<span class="t" style="left:1496.9px;top:298.5px;font-size:10px;line-height:10px;font-weight:700;letter-spacing:-0.507px;color:#fff;">Objetivo</span>
<span class="t" style="left:1543.2px;top:298.5px;font-size:10px;line-height:10px;font-weight:700;color:#fff;">&lt;</span>
<span class="t" style="left:1557.95px;top:298.5px;font-size:10px;line-height:10px;font-weight:700;letter-spacing:0.395px;color:#fff;">0.0110</span>
<span class="t" style="left:1613.7px;top:298.5px;font-size:10px;line-height:10px;font-weight:700;letter-spacing:-0.194px;color:#fff;">Tolerable [0.0110 - 0.0140]</span>
<span class="t" style="left:1754.35px;top:298.5px;font-size:10px;line-height:10px;font-weight:700;letter-spacing:-0.27px;color:#fff;">Deficiente</span>
<span class="t" style="left:1809.6px;top:298.5px;font-size:10px;line-height:10px;font-weight:700;color:#fff;">&lt;</span>
<span class="t" style="left:1824.35px;top:298.5px;font-size:10px;line-height:10px;font-weight:700;letter-spacing:0.295px;color:#fff;">0.0110</span>
<span class="t" style="left:544.12px;top:328.0px;font-size:14px;line-height:14px;letter-spacing:-0.38px;color:#484848;">12</span>
<span class="t" style="left:607.66px;top:328.0px;font-size:14px;line-height:14px;letter-spacing:-0.258px;color:#484848;">LY053</span>
<span class="t" style="left:703.38px;top:328.0px;font-size:14px;line-height:14px;letter-spacing:-0.029px;color:#484848;">11.00R20</span>
<span class="t" style="left:800.06px;top:328.0px;font-size:14px;line-height:14px;letter-spacing:0.345px;color:#484848;">0.0115</span>
<span class="t" style="left:947.56px;top:328.0px;font-size:14px;line-height:14px;letter-spacing:-0.007px;color:#484848;">0.0140</span>
<span class="t" style="left:1147.06px;top:328.0px;font-size:14px;line-height:14px;letter-spacing:0.345px;color:#484848;">0.0115</span>
<span class="t" style="left:1344.56px;top:328.0px;font-size:14px;line-height:14px;letter-spacing:0.053px;color:#484848;">0.0140</span>
<span class="t" style="left:1496.9px;top:330.5px;font-size:10px;line-height:10px;font-weight:700;letter-spacing:-0.507px;color:#fff;">Objetivo</span>
<span class="t" style="left:1543.2px;top:330.5px;font-size:10px;line-height:10px;font-weight:700;color:#fff;">&lt;</span>
<span class="t" style="left:1557.95px;top:330.5px;font-size:10px;line-height:10px;font-weight:700;letter-spacing:0.375px;color:#fff;">0.0115</span>
<span class="t" style="left:1613.7px;top:330.5px;font-size:10px;line-height:10px;font-weight:700;letter-spacing:-0.194px;color:#fff;">Tolerable [0.0115 - 0.0140]</span>
<span class="t" style="left:1754.35px;top:330.5px;font-size:10px;line-height:10px;font-weight:700;letter-spacing:-0.27px;color:#fff;">Deficiente</span>
<span class="t" style="left:1809.6px;top:330.5px;font-size:10px;line-height:10px;font-weight:700;color:#fff;">&lt;</span>
<span class="t" style="left:1824.35px;top:330.5px;font-size:10px;line-height:10px;font-weight:700;letter-spacing:0.275px;color:#fff;">0.0115</span>
<span class="t" style="left:544.12px;top:360.0px;font-size:14px;line-height:14px;letter-spacing:-0.38px;color:#484848;">13</span>
<span class="t" style="left:607.66px;top:360.0px;font-size:14px;line-height:14px;letter-spacing:0.201px;color:#484848;">MY507</span>
<span class="t" style="left:703.38px;top:360.0px;font-size:14px;line-height:14px;letter-spacing:-0.123px;color:#484848;">12R22.5</span>
<span class="t" style="left:800.06px;top:360.0px;font-size:14px;line-height:14px;letter-spacing:0.093px;color:#484848;">0.0130</span>
<span class="t" style="left:947.56px;top:360.0px;font-size:14px;line-height:14px;letter-spacing:-0.007px;color:#484848;">0.0150</span>
<span class="t" style="left:1147.06px;top:360.0px;font-size:14px;line-height:14px;letter-spacing:0.093px;color:#484848;">0.0130</span>
<span class="t" style="left:1344.56px;top:360.0px;font-size:14px;line-height:14px;letter-spacing:0.053px;color:#484848;">0.0150</span>
<span class="t" style="left:1496.9px;top:362.5px;font-size:10px;line-height:10px;font-weight:700;letter-spacing:-0.507px;color:#fff;">Objetivo</span>
<span class="t" style="left:1543.2px;top:362.5px;font-size:10px;line-height:10px;font-weight:700;color:#fff;">&lt;</span>
<span class="t" style="left:1557.95px;top:362.5px;font-size:10px;line-height:10px;font-weight:700;letter-spacing:0.285px;color:#fff;">0.0130</span>
<span class="t" style="left:1613.7px;top:362.5px;font-size:10px;line-height:10px;font-weight:700;letter-spacing:-0.215px;color:#fff;">Tolerable [0.0130 - 0.0150]</span>
<span class="t" style="left:1754.35px;top:362.5px;font-size:10px;line-height:10px;font-weight:700;letter-spacing:-0.27px;color:#fff;">Deficiente</span>
<span class="t" style="left:1809.6px;top:362.5px;font-size:10px;line-height:10px;font-weight:700;color:#fff;">&lt;</span>
<span class="t" style="left:1824.35px;top:362.5px;font-size:10px;line-height:10px;font-weight:700;letter-spacing:0.185px;color:#fff;">0.0130</span>
<span class="t" style="left:544.12px;top:392.0px;font-size:14px;line-height:14px;letter-spacing:-0.599px;color:#484848;">14</span>
<span class="t" style="left:607.66px;top:392.0px;font-size:14px;line-height:14px;letter-spacing:0.201px;color:#484848;">MY547</span>
<span class="t" style="left:703.38px;top:392.0px;font-size:14px;line-height:14px;letter-spacing:-0.029px;color:#484848;">11.00R20</span>
<span class="t" style="left:800.06px;top:392.0px;font-size:14px;line-height:14px;letter-spacing:0.093px;color:#484848;">0.0130</span>
<span class="t" style="left:947.56px;top:392.0px;font-size:14px;line-height:14px;letter-spacing:-0.007px;color:#484848;">0.0150</span>
<span class="t" style="left:1147.06px;top:392.0px;font-size:14px;line-height:14px;letter-spacing:0.093px;color:#484848;">0.0130</span>
<span class="t" style="left:1344.56px;top:392.0px;font-size:14px;line-height:14px;letter-spacing:0.053px;color:#484848;">0.0150</span>
<span class="t" style="left:1496.9px;top:394.5px;font-size:10px;line-height:10px;font-weight:700;letter-spacing:-0.507px;color:#fff;">Objetivo</span>
<span class="t" style="left:1543.2px;top:394.5px;font-size:10px;line-height:10px;font-weight:700;color:#fff;">&lt;</span>
<span class="t" style="left:1557.95px;top:394.5px;font-size:10px;line-height:10px;font-weight:700;letter-spacing:0.285px;color:#fff;">0.0130</span>
<span class="t" style="left:1613.7px;top:394.5px;font-size:10px;line-height:10px;font-weight:700;letter-spacing:-0.215px;color:#fff;">Tolerable [0.0130 - 0.0150]</span>
<span class="t" style="left:1754.35px;top:394.5px;font-size:10px;line-height:10px;font-weight:700;letter-spacing:-0.27px;color:#fff;">Deficiente</span>
<span class="t" style="left:1809.6px;top:394.5px;font-size:10px;line-height:10px;font-weight:700;color:#fff;">&lt;</span>
<span class="t" style="left:1824.35px;top:394.5px;font-size:10px;line-height:10px;font-weight:700;letter-spacing:0.185px;color:#fff;">0.0130</span>
<span class="t" style="left:544.12px;top:424.5px;font-size:14px;line-height:14px;letter-spacing:-0.38px;color:#484848;">19</span>
<span class="t" style="left:607.66px;top:424.5px;font-size:14px;line-height:14px;letter-spacing:-0.258px;color:#484848;">LY053</span>
<span class="t" style="left:703.38px;top:424.5px;font-size:14px;line-height:14px;letter-spacing:-0.123px;color:#484848;">12R22.5</span>
<span class="t" style="left:800.06px;top:424.5px;font-size:14px;line-height:14px;letter-spacing:0.301px;color:#484848;">0.0110</span>
<span class="t" style="left:947.56px;top:424.5px;font-size:14px;line-height:14px;letter-spacing:-0.007px;color:#484848;">0.0130</span>
<span class="t" style="left:1147.06px;top:424.5px;font-size:14px;line-height:14px;letter-spacing:0.301px;color:#484848;">0.0110</span>
<span class="t" style="left:1344.56px;top:424.5px;font-size:14px;line-height:14px;letter-spacing:0.053px;color:#484848;">0.0130</span>
<span class="t" style="left:1496.9px;top:427.5px;font-size:10px;line-height:10px;font-weight:700;letter-spacing:-0.507px;color:#fff;">Objetivo</span>
<span class="t" style="left:1543.2px;top:427.5px;font-size:10px;line-height:10px;font-weight:700;color:#fff;">&lt;</span>
<span class="t" style="left:1557.95px;top:427.5px;font-size:10px;line-height:10px;font-weight:700;letter-spacing:0.395px;color:#fff;">0.0110</span>
<span class="t" style="left:1613.7px;top:427.5px;font-size:10px;line-height:10px;font-weight:700;letter-spacing:-0.194px;color:#fff;">Tolerable [0.0110 - 0.0130]</span>
<span class="t" style="left:1754.35px;top:427.5px;font-size:10px;line-height:10px;font-weight:700;letter-spacing:-0.27px;color:#fff;">Deficiente</span>
<span class="t" style="left:1809.6px;top:427.5px;font-size:10px;line-height:10px;font-weight:700;color:#fff;">&lt;</span>
<span class="t" style="left:1824.35px;top:427.5px;font-size:10px;line-height:10px;font-weight:700;letter-spacing:0.295px;color:#fff;">0.0110</span>
<span class="t" style="left:1547.45px;top:472.0px;font-size:12px;line-height:12px;letter-spacing:-0.055px;color:rgba(0,0,0,.8);">Rows per page:</span>
<span class="t" style="left:1664.05px;top:472.0px;font-size:12px;line-height:12px;color:rgba(0,0,0,.8);">5</span>
<span class="t" style="left:1739.9px;top:472.0px;font-size:12px;line-height:12px;letter-spacing:0.097px;color:rgba(0,0,0,.8);">1-5 of 7</span>
</body></html>
